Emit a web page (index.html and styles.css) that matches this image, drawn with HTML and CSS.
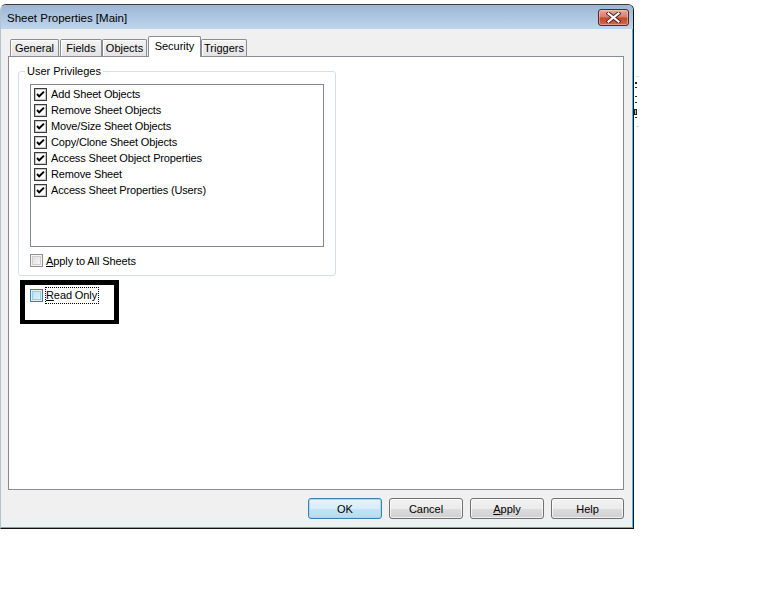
FILE: index.html
```html
<!DOCTYPE html>
<html>
<head>
<meta charset="utf-8">
<title>Sheet Properties [Main]</title>
<link rel="stylesheet" href="styles.css">
</head>
<body>
<div class="screen">
  <div class="window">
    <div class="titlebar">
      <span class="title">Sheet Properties [Main]</span>
      <div class="close">
        <svg width="15" height="11" viewBox="0 0 15 11"><path d="M2.5 1.5 L12.5 9.5 M12.5 1.5 L2.5 9.5" stroke="#4a1d1a" stroke-width="4" stroke-linecap="square"/><path d="M2.5 1.5 L12.5 9.5 M12.5 1.5 L2.5 9.5" stroke="#ffffff" stroke-width="2.2" stroke-linecap="square"/></svg>
      </div>
    </div>
    <div class="client">
      <div class="tabs">
        <div class="tab t-general">General</div>
        <div class="tab t-fields">Fields</div>
        <div class="tab t-objects">Objects</div>
        <div class="tab t-security selected">Security</div>
        <div class="tab t-triggers">Triggers</div>
      </div>
      <div class="panel">
        <fieldset class="group">
          <legend>User Privileges</legend>
          <div class="list">
            <div class="item"><span class="lcb"><svg width="13" height="13" viewBox="0 0 13 13"><rect x="0.5" y="0.5" width="12" height="12" fill="#fff" stroke="#3a3a3a"/><rect x="1.5" y="1.5" width="10" height="10" fill="none" stroke="#c8c8c8"/><path d="M3 6 L5.2 8.3 L10 3.6" fill="none" stroke="#000" stroke-width="1.9"/></svg></span>Add Sheet Objects</div>
            <div class="item"><span class="lcb"><svg width="13" height="13" viewBox="0 0 13 13"><rect x="0.5" y="0.5" width="12" height="12" fill="#fff" stroke="#3a3a3a"/><rect x="1.5" y="1.5" width="10" height="10" fill="none" stroke="#c8c8c8"/><path d="M3 6 L5.2 8.3 L10 3.6" fill="none" stroke="#000" stroke-width="1.9"/></svg></span>Remove Sheet Objects</div>
            <div class="item"><span class="lcb"><svg width="13" height="13" viewBox="0 0 13 13"><rect x="0.5" y="0.5" width="12" height="12" fill="#fff" stroke="#3a3a3a"/><rect x="1.5" y="1.5" width="10" height="10" fill="none" stroke="#c8c8c8"/><path d="M3 6 L5.2 8.3 L10 3.6" fill="none" stroke="#000" stroke-width="1.9"/></svg></span>Move/Size Sheet Objects</div>
            <div class="item"><span class="lcb"><svg width="13" height="13" viewBox="0 0 13 13"><rect x="0.5" y="0.5" width="12" height="12" fill="#fff" stroke="#3a3a3a"/><rect x="1.5" y="1.5" width="10" height="10" fill="none" stroke="#c8c8c8"/><path d="M3 6 L5.2 8.3 L10 3.6" fill="none" stroke="#000" stroke-width="1.9"/></svg></span>Copy/Clone Sheet Objects</div>
            <div class="item"><span class="lcb"><svg width="13" height="13" viewBox="0 0 13 13"><rect x="0.5" y="0.5" width="12" height="12" fill="#fff" stroke="#3a3a3a"/><rect x="1.5" y="1.5" width="10" height="10" fill="none" stroke="#c8c8c8"/><path d="M3 6 L5.2 8.3 L10 3.6" fill="none" stroke="#000" stroke-width="1.9"/></svg></span>Access Sheet Object Properties</div>
            <div class="item"><span class="lcb"><svg width="13" height="13" viewBox="0 0 13 13"><rect x="0.5" y="0.5" width="12" height="12" fill="#fff" stroke="#3a3a3a"/><rect x="1.5" y="1.5" width="10" height="10" fill="none" stroke="#c8c8c8"/><path d="M3 6 L5.2 8.3 L10 3.6" fill="none" stroke="#000" stroke-width="1.9"/></svg></span>Remove Sheet</div>
            <div class="item"><span class="lcb"><svg width="13" height="13" viewBox="0 0 13 13"><rect x="0.5" y="0.5" width="12" height="12" fill="#fff" stroke="#3a3a3a"/><rect x="1.5" y="1.5" width="10" height="10" fill="none" stroke="#c8c8c8"/><path d="M3 6 L5.2 8.3 L10 3.6" fill="none" stroke="#000" stroke-width="1.9"/></svg></span>Access Sheet Properties (Users)</div>
          </div>
          <div class="check-row apply-row">
            <span class="cb"></span>
            <span class="label"><u>A</u>pply to All Sheets</span>
          </div>
        </fieldset>
        <div class="highlight">
          <div class="check-row">
            <span class="cb hover"></span>
            <span class="label focus"><u>R</u>ead Only</span>
          </div>
        </div>
      </div>
      <div class="buttons">
        <button class="btn default w74">OK</button>
        <button class="btn w74">Cancel</button>
        <button class="btn w74"><u>A</u>pply</button>
        <button class="btn w73">Help</button>
      </div>
    </div>
  </div>
  <div class="behind">
    <svg width="6" height="60" viewBox="0 0 6 60"><rect x="1" y="6" width="2" height="2" fill="#222"/><rect x="1" y="11" width="2" height="1" fill="#222"/><rect x="1" y="20" width="2" height="1" fill="#222"/><rect x="1" y="26" width="2" height="1" fill="#222"/><rect x="0" y="33" width="3" height="6" fill="#222"/><rect x="1" y="34" width="1" height="4" fill="#bbb"/><rect x="1" y="41" width="2" height="1" fill="#222"/><rect x="2" y="0" width="3" height="1" fill="#ddd"/><rect x="2" y="50" width="3" height="1" fill="#ddd"/></svg>
  </div>
</div>
</body>
</html>
```

FILE: styles.css
```css
* {
  box-sizing: border-box;
}

body {
  margin: 0;
  background: #ffffff;
  font-family: "Liberation Sans", Arial, sans-serif;
  font-size: 11px;
  color: #000;
}

.screen {
  display: flex;
  align-items: flex-start;
  padding-top: 4px;
}

.window {
  width: 634px;
  border: 1px solid #3c3c3c;
  border-left-color: #b4c3d2;
  border-right-color: #111;
  border-bottom-color: #111;
  border-radius: 6px 6px 0 0;
  overflow: hidden;
}

.titlebar {
  height: 24px;
  display: flex;
  align-items: center;
  justify-content: space-between;
  padding: 0 4px 0 6px;
  background: linear-gradient(#9cb6d4, #bfd5ed);
}

.title {
  font-size: 11.5px;
  padding-top: 1px;
}

.close {
  width: 31px;
  height: 17px;
  border: 1px solid #5e2420;
  border-radius: 3px;
  background: linear-gradient(#e7a99c 0%, #d7806c 45%, #c4472f 55%, #d26b4f 100%);
  display: flex;
  align-items: center;
  justify-content: center;
  box-shadow: inset 0 0 0 1px rgba(255, 220, 210, 0.45);
}

.client {
  background: #f0f0f0;
  border-right: 1px solid #38bde9;
  border-bottom: 1px solid #38bde9;
  padding: 7px 8px 8px 7px;
}

.tabs {
  display: flex;
  align-items: flex-end;
  height: 20px;
  padding-left: 2px;
}

.tab {
  height: 17px;
  border: 1px solid #898c95;
  border-bottom: none;
  background: linear-gradient(#f3f3f3, #e3e3e3);
  display: flex;
  align-items: center;
  justify-content: center;
  border-radius: 2px 2px 0 0;
  box-shadow: inset 1px 1px 0 #fff;
}

.t-general { width: 49px; }
.t-fields { width: 42px; margin-left: 1px; }
.t-objects { width: 45px; }
.t-security { width: 53px; margin-left: 1px; }
.t-triggers { width: 46px; }

.tab.selected {
  height: 21px;
  margin-bottom: -1px;
  background: #fff;
  position: relative;
  z-index: 1;
  padding-bottom: 3px;
  box-shadow: none;
}

.panel {
  height: 434px;
  border: 1px solid #898c95;
  background: #fff;
  padding: 7px 0 0 9px;
}

.group {
  width: 318px;
  margin: 0;
  padding: 5px 11px 8px 11px;
  border: 1px solid #d5dfe5;
  border-radius: 3px;
  min-inline-size: 0;
}

.group legend {
  line-height: 15px;
  padding: 0 2px;
  margin-left: -5px;
}

.list {
  height: 163px;
  border: 1px solid #828790;
  padding-top: 1px;
}

.item {
  height: 16px;
  display: flex;
  align-items: center;
  padding-left: 3px;
  letter-spacing: -0.15px;
}

.lcb {
  width: 13px;
  height: 13px;
  margin-right: 4px;
  display: flex;
}

.check-row {
  display: flex;
  align-items: center;
}

.apply-row {
  margin-top: 7px;
  height: 13px;
  letter-spacing: -0.1px;
}

.cb {
  width: 13px;
  height: 13px;
  border: 1px solid #8e8f8f;
  background: linear-gradient(135deg, #dcdcdc, #fbfbfb);
  box-shadow: inset 0 0 0 1px #f4f4f4, inset 0 0 0 2px #cfcfcf;
  margin-right: 3px;
}

.cb.hover {
  border-color: #3c7fb1;
  background: linear-gradient(135deg, #b1dcf6, #e9f5fc);
  box-shadow: inset 0 0 0 1px #def0fa, inset 0 0 0 2px #9cc8e6;
  margin-right: 2px;
}

.label u {
  text-decoration: underline;
}

.highlight {
  width: 99px;
  height: 44px;
  margin: 4px 0 0 2px;
  border: 5px solid #000;
  border-bottom-width: 4px;
  padding: 2px 0 0 5px;
}

.focus {
  border: 1px dotted #000;
  line-height: 15px;
  padding: 0 1px 0 0;
  letter-spacing: -0.1px;
}

.buttons {
  display: flex;
  justify-content: flex-end;
  gap: 7px;
  margin-top: 8px;
}

.btn {
  height: 21px;
  padding: 0;
  border: 1px solid #707070;
  border-radius: 3px;
  font-family: "Liberation Sans", Arial, sans-serif;
  font-size: 11px;
  color: #000;
  background: linear-gradient(#f2f2f2 0%, #ebebeb 50%, #dddddd 50%, #cfcfcf 100%);
  box-shadow: inset 0 0 0 1px rgba(255, 255, 255, 0.7);
}

.btn.default {
  border-color: #3c7fb1;
  background: linear-gradient(#e6f3fb 0%, #d8edf9 50%, #c4e3f6 50%, #b6dbf2 100%);
  box-shadow: inset 0 0 0 1px #9fdcf8;
}

.w74 { width: 74px; }
.w73 { width: 73px; }

.behind {
  padding-top: 72px;
  display: flex;
}
```
